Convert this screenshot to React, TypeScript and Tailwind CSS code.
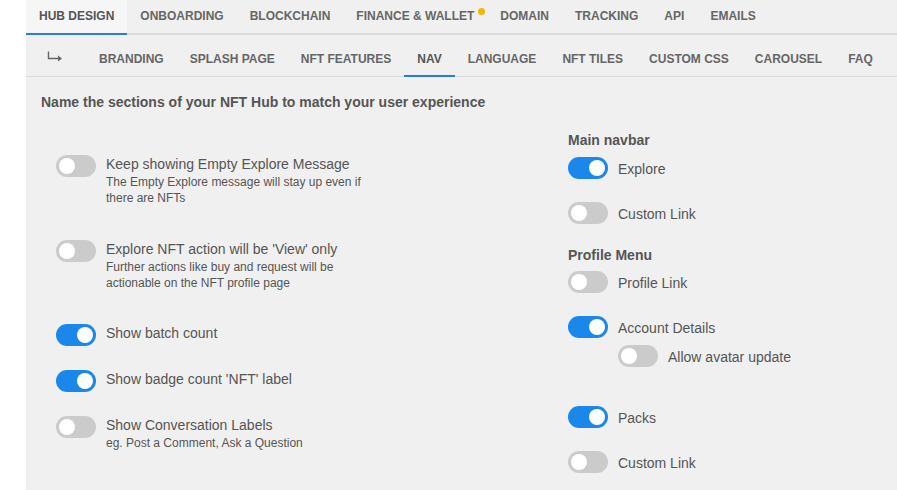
import type { ReactNode } from "react";

const TOP_TABS = ["HUB DESIGN", "ONBOARDING", "BLOCKCHAIN", "FINANCE & WALLET", "DOMAIN", "TRACKING", "API", "EMAILS"];
const SUB_TABS = ["BRANDING", "SPLASH PAGE", "NFT FEATURES", "NAV", "LANGUAGE", "NFT TILES", "CUSTOM CSS", "CAROUSEL", "FAQ"];

function Toggle({ on }: { on?: boolean }) {
  return (
    <span
      className={
        "relative inline-block w-[40px] h-[22px] rounded-full shrink-0 " +
        (on ? "bg-[#1a88eb]" : "bg-[#cbcbcb]")
      }
    >
      <span
        className={
          "absolute top-[3px] w-[16px] h-[16px] rounded-full bg-white " + (on ? "right-[3px]" : "left-[3px]")
        }
      />
    </span>
  );
}

function LeftRow({ on, label, sub, className }: { on?: boolean; label: string; sub?: ReactNode; className?: string }) {
  return (
    <div className={"flex gap-[10px] " + (className ?? "")}>
      <Toggle on={on} />
      <div>
        <div className="text-[14px] leading-[18px] text-[#555]">{label}</div>
        {sub && <div className="mt-[1px] text-[12px] leading-[16px] text-[#555] w-[262px]">{sub}</div>}
      </div>
    </div>
  );
}

function RightRow({ on, label, className }: { on?: boolean; label: string; className?: string }) {
  return (
    <div className={"flex items-center gap-[10px] " + (className ?? "")}>
      <Toggle on={on} />
      <span className="text-[14px] leading-[18px] text-[#555] pt-[1px]">{label}</span>
    </div>
  );
}

export default function App() {
  return (
    <div
      className="w-[897px] h-[490px] bg-white flex overflow-hidden"
      style={{ fontFamily: '"Liberation Sans", Arial, sans-serif' }}
    >
      <div className="w-[26px] shrink-0" />
      <div className="flex-1 bg-[#f0f0f0] flex flex-col">
        {/* top tabs */}
        <div className="flex h-[35px] border-b-2 border-[#dcdcdc]">
          {TOP_TABS.map((t) => {
            const active = t === "HUB DESIGN";
            return (
              <div
                key={t}
                className={
                  "relative flex items-center px-[13px] text-[12px] font-bold " +
                  (active
                    ? "bg-[#f6f6f6] text-[#555] border-b-2 border-[#2a7ae2] -mb-[2px] pb-[2px]"
                    : "text-[#666] pb-[2px]")
                }
              >
                {t}
                {t === "FINANCE & WALLET" && (
                  <span className="absolute right-[2px] top-[8px] w-[7px] h-[7px] rounded-full bg-[#f7b500]" />
                )}
              </div>
            );
          })}
        </div>

        {/* sub tabs */}
        <div className="flex h-[42px] border-b border-[#dcdcdc]">
          <div className="w-[60px] flex items-center pl-[21px] pt-[3px]">
            <svg width="16" height="12" viewBox="0 0 16 12" fill="none">
              <path d="M1.5 0.5V7.5H12" stroke="#666" strokeWidth="1.4" />
              <path d="M11 4.5L15 7.5L11 10.5Z" fill="#666" />
            </svg>
          </div>
          {SUB_TABS.map((t) => {
            const active = t === "NAV";
            return (
              <div
                key={t}
                className={
                  "flex items-center px-[13px] pt-[7px] text-[12px] font-bold border-b-2 -mb-px " +
                  (active ? "text-[#555] border-[#2a7ae2]" : "text-[#666] border-transparent")
                }
              >
                {t}
              </div>
            );
          })}
        </div>

        {/* content */}
        <div className="pl-[15px] pt-[17px]">
          <div className="text-[14px] leading-[17px] font-bold text-[#555]">
            Name the sections of your NFT Hub to match your user experience
          </div>
        </div>

        <div className="flex">
          <div className="w-[542px] pl-[30px] pt-[44px]">
            <LeftRow
              label="Keep showing Empty Explore Message"
              sub="The Empty Explore message will stay up even if there are NFTs"
              className="mb-[34px]"
            />
            <LeftRow
              label="Explore NFT action will be 'View' only"
              sub="Further actions like buy and request will be actionable on the NFT profile page"
              className="mb-[33px]"
            />
            <LeftRow on label="Show batch count" className="mb-[24px]" />
            <LeftRow on label="Show badge count 'NFT' label" className="mb-[24px]" />
            <LeftRow label="Show Conversation Labels" sub="eg. Post a Comment, Ask a Question" />
          </div>

          <div className="pt-[20px]">
            <div className="text-[14px] leading-[18px] font-bold text-[#555] mb-[8px]">Main navbar</div>
            <RightRow on label="Explore" className="mb-[23px]" />
            <RightRow label="Custom Link" className="mb-[22px]" />
            <div className="text-[14px] leading-[18px] font-bold text-[#555] mb-[7px]">Profile Menu</div>
            <RightRow label="Profile Link" className="mb-[23px]" />
            <RightRow on label="Account Details" className="mb-[7px]" />
            <RightRow label="Allow avatar update" className="ml-[50px] mb-[39px]" />
            <RightRow on label="Packs" className="mb-[23px]" />
            <RightRow label="Custom Link" />
          </div>
        </div>
      </div>
    </div>
  );
}
